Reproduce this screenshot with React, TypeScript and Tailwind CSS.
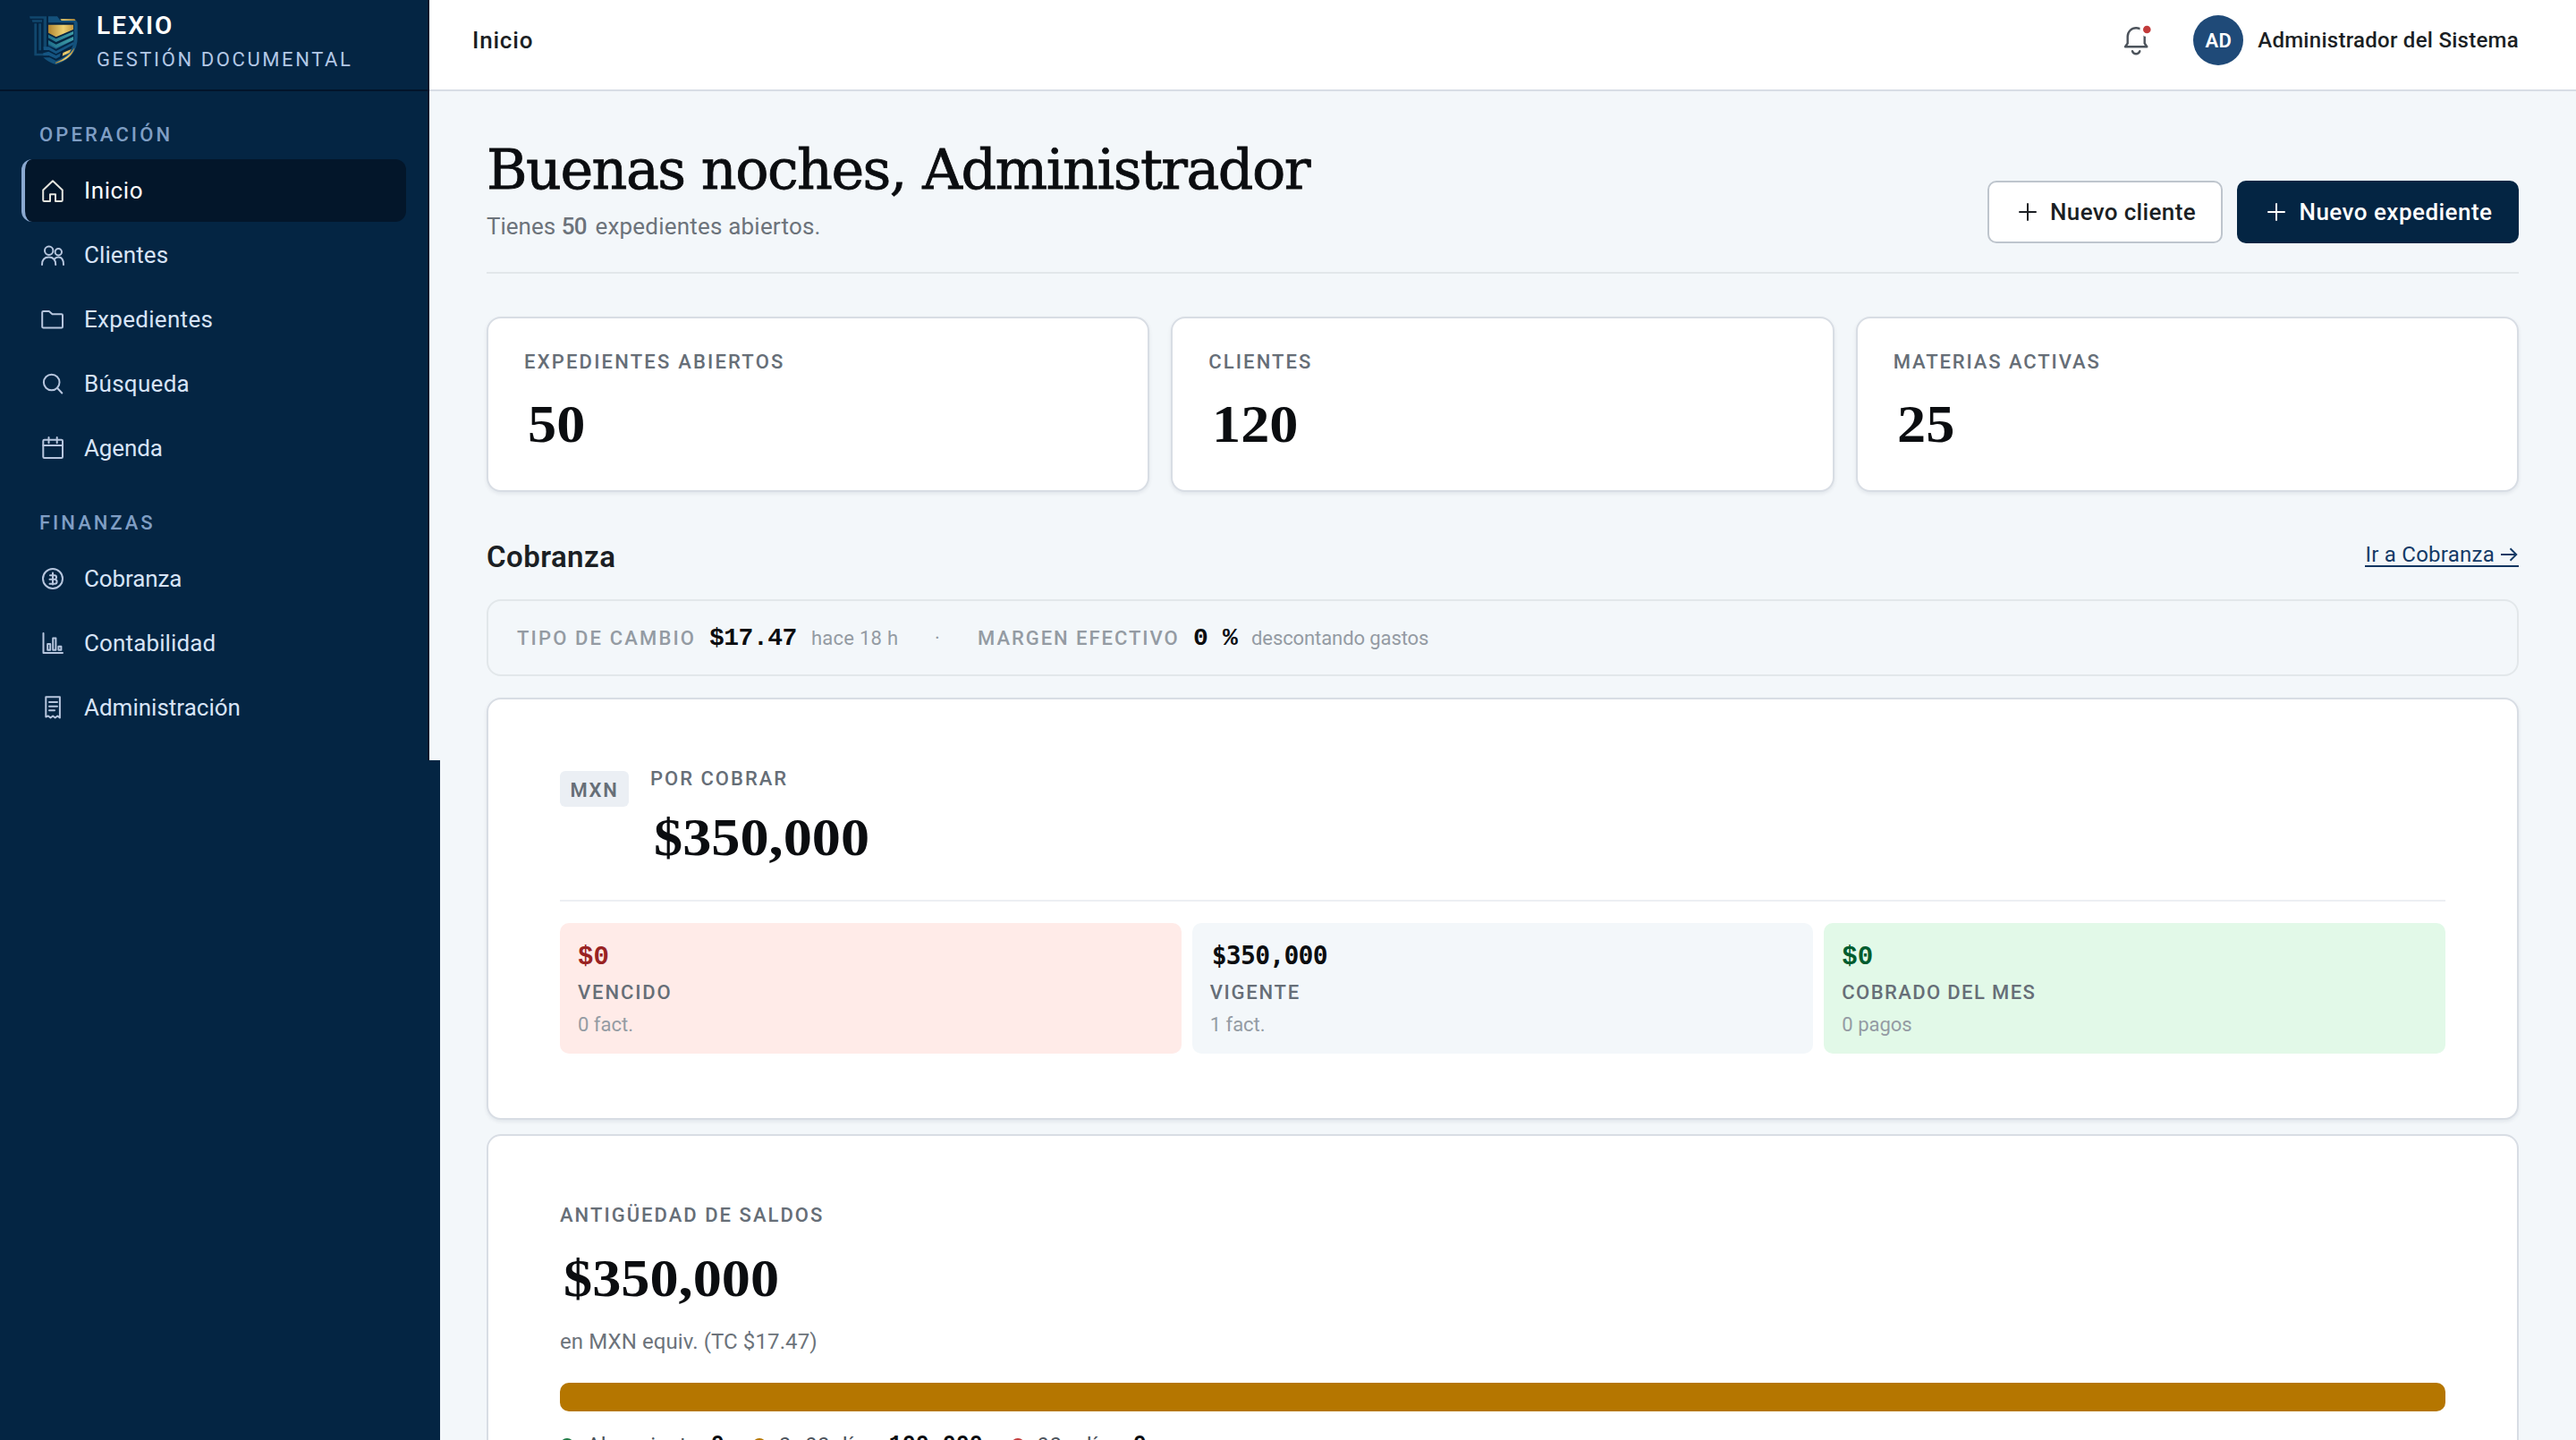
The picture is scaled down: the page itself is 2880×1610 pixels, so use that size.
import React from 'react';

const Icon = ({ children }: { children: React.ReactNode }) => (
  <svg
    className="h-[30px] w-[30px] shrink-0"
    viewBox="0 0 30 30"
    fill="none"
    stroke="currentColor"
    strokeWidth="2"
    strokeLinecap="round"
    strokeLinejoin="round"
  >
    {children}
  </svg>
);

const HomeIcon = () => (
  <Icon>
    <path d="M15 4.3 4.2 14.5v11.2c0 .8.5 1.3 1.3 1.3H12v-7.7h6V27h6.5c.8 0 1.3-.5 1.3-1.3V14.5L15 4.3Z" />
  </Icon>
);

const UsersIcon = () => (
  <Icon>
    <circle cx="10.7" cy="10.2" r="4.7" />
    <circle cx="21.3" cy="11.7" r="3.7" />
    <path d="M3 26c0-5.5 3-8.5 7.6-8.5s7.6 3 7.6 8.5M17.5 19c1-1 2.3-1.5 4-1.5 3.5 0 5.5 2.8 5.5 8.5" />
  </Icon>
);

const FolderIcon = () => (
  <Icon>
    <path d="M3.2 7.2c0-.8.5-1.3 1.3-1.3h6.3l3.7 3.3h10.2c.8 0 1.3.5 1.3 1.3v12.7c0 .8-.5 1.3-1.3 1.3H4.5c-.8 0-1.3-.5-1.3-1.3Z" />
  </Icon>
);

const SearchIcon = () => (
  <Icon>
    <circle cx="13.7" cy="13.5" r="8.8" />
    <path d="m20 19.800 5.300 5.700" />
  </Icon>
);

const CalendarIcon = () => (
  <Icon>
    <rect x="4.3" y="5.7" width="21.7" height="20.3" rx="1.3" />
    <path d="M4.3 12H26M10.5 3v6.3M19.7 3v6.3" />
  </Icon>
);

const CoinIcon = () => (
  <Icon>
    <circle cx="15" cy="15" r="11" />
    <path d="M15 8.5v13M12 11.3h4.8a2.2 2.2 0 0 1 0 4.5H11.5M16.8 15.8h.3a2.4 2.4 0 0 1 0 5H11.5" />
  </Icon>
);

const ChartIcon = () => (
  <Icon>
    <path d="M4.5 4v22H26" />
    <path d="M9.2 22.8v-6.8h3v6.800ZM15.2 22.8V9.500h3.200v13.300ZM21.400 22.800v-4h3v4Z" />
  </Icon>
);

const ReceiptIcon = () => (
  <Icon>
    <path d="M7.3 3.300h15.600v23.200l-2.600-2-2.600 2-2.600-2-2.600 2-2.600-2-2.600 1Z" />
    <path d="M11 9h9M11 13.700h9M11 18.300h6" />
  </Icon>
);

const PlusIcon = () => (
  <Icon>
    <path d="M15 6v18M6 15h18" />
  </Icon>
);

const Logo = () => (
  <svg className="h-14 w-[54px] shrink-0" viewBox="99 50 162 168">
    <defs>
      <linearGradient id="gold" x1="0" x2="1">
        <stop offset="0" stopColor="#b08430" />
        <stop offset="0.55" stopColor="#ecd071" />
        <stop offset="1" stopColor="#b98b35" />
      </linearGradient>
      <linearGradient id="teal" x1="0" x2="1">
        <stop offset="0" stopColor="#1f6f8b" />
        <stop offset="1" stopColor="#3f9da6" />
      </linearGradient>
    </defs>
    <g fill="#11476d">
      <path d="M99 54h57v108h-10V61H101ZM107 66h34v7h-32ZM115 78h8v100h28l12 8h-48ZM130 78h8v90h-8Z" />
      <path d="M146 156h18l24 14 58-30v9l-58 31-24-13h-18Z" fill="#155582" />
      <path d="M162 54h30l10 13h48q10 0 10 11v48q0 65-72 90-26-8-43-24h22l21 11q60-22 60-77V75h-86Z" fill="#14517b" />
      <path d="M163 172l25 13 16-8-3 12-13 7-25-11h-18v-8Z" fill="#155582" />
      <path d="m162 152 26 12 58-30v-7l-58 29-26-12Z" fill="#14517b" />
    </g>
    <path d="M202 63h48l4 5h-48ZM162 82h84v16l-58 25-26-14Z" fill="url(#gold)" />
    <path d="m162 115 26 14 58-25v10l-58 26-26-14ZM162 134l26 14 58-26v11l-58 27-26-14Z" fill="url(#teal)" />
    <path d="m211 176 28-12-6 12-24 11ZM186 209q42-14 64-50-8 38-64 53Z" fill="url(#gold)" />
  </svg>
);

const sections = [
  {
    title: 'OPERACIÓN',
    titleClass: 'tracking-[3.1px]',
    items: [
      { label: 'Inicio', icon: <HomeIcon />, labelClass: 'tracking-[0.6px]', active: true },
      { label: 'Clientes', icon: <UsersIcon />, labelClass: 'tracking-[0.1px]' },
      { label: 'Expedientes', icon: <FolderIcon />, labelClass: 'tracking-[0.3px]' },
      { label: 'Búsqueda', icon: <SearchIcon />, labelClass: 'tracking-[0.3px]' },
      { label: 'Agenda', icon: <CalendarIcon />, labelClass: 'tracking-[-0.1px]' },
    ],
  },
  {
    title: 'FINANZAS',
    titleClass: 'tracking-[3px]',
    items: [
      { label: 'Cobranza', icon: <CoinIcon />, labelClass: 'tracking-[-0.1px]' },
      { label: 'Contabilidad', icon: <ChartIcon />, labelClass: 'tracking-[0.13px]' },
      { label: 'Administración', icon: <ReceiptIcon />, labelClass: 'tracking-normal' },
    ],
  },
];

const stats = [
  { label: 'EXPEDIENTES ABIERTOS', value: '50', labelClass: 'tracking-[2.2px]' },
  { label: 'CLIENTES', value: '120', labelClass: 'tracking-[2.1px]' },
  { label: 'MATERIAS ACTIVAS', value: '25', labelClass: 'tracking-[1.9px]' },
];

const tiles = [
  {
    value: '$0',
    label: 'VENCIDO',
    detail: '0 fact.',
    box: 'bg-[#ffebe8]',
    valueClass: "pt-[3px] font-['Liberation_Mono',monospace] text-[29px] text-[#992222]",
    labelClass: 'tracking-[1.9px]',
  },
  {
    value: '$350,000',
    label: 'VIGENTE',
    detail: '1 fact.',
    box: 'bg-[#f3f7fa]',
    valueClass: "pl-[2px] pt-[1px] font-['DejaVu_Sans_Mono',monospace] text-[28px] tracking-[-0.7px] text-[#0b0d10]",
    labelClass: 'tracking-[1.75px]',
  },
  {
    value: '$0',
    label: 'COBRADO DEL MES',
    detail: '0 pagos',
    box: 'bg-[#e2f9e8]',
    valueClass: "pt-[3px] font-['Liberation_Mono',monospace] text-[29px] text-[#005c2e]",
    labelClass: 'tracking-[1.4px]',
  },
];

const legend = [
  { label: 'Al corriente', value: '0', dot: 'bg-[#1f7a45]' },
  { label: '0–90 días', value: '100,000', dot: 'bg-[#b57600]' },
  { label: '90+ días', value: '0', dot: 'bg-[#c23b3b]' },
];

function Amount({ children }: { children: React.ReactNode }) {
  return (
    <p className="ml-1 origin-left scale-x-[1.09] font-['Liberation_Serif',serif] text-[59px] leading-[72px] font-bold text-[#0b0d10]">
      {children}
    </p>
  );
}

function Sidebar() {
  return (
    <aside className="relative z-10 flex w-[480px] shrink-0 flex-col">
      <div className="h-[850px] border-r-2 border-[#02142a] bg-[#042543]">
        <div className="flex h-[102px] items-center border-b-2 border-[#02142a] pb-[10px] pl-[33px]">
          <Logo />
          <div className="ml-[21px] pt-[5px]">
            <p className="text-[28px] leading-[38px] font-semibold tracking-[2.1px] text-white">LEXIO</p>
            <p className="text-[22px] leading-[38px] tracking-[2.6px] text-[#b3c8e6]">GESTIÓN DOCUMENTAL</p>
          </div>
        </div>
        <nav className="px-6">
          {sections.map((section) => (
            <div key={section.title} className="pt-[35px]">
              <h2 className={`mb-[13px] pl-[20px] text-[22px] leading-7 font-medium text-[#7f9ec4] ${section.titleClass}`}>
                {section.title}
              </h2>
              <ul className="flex flex-col gap-[2px]">
                {section.items.map((item) => (
                  <li
                    key={item.label}
                    className={`flex h-[70px] w-[430px] items-center gap-5 rounded-[12px] border-l-4 pl-4 ${
                      item.active ? 'border-[#8aa8d0] bg-[#03162a] text-[#e4e4de]' : 'border-transparent text-[#b7c6de]'
                    }`}
                  >
                    {item.icon}
                    <span className={`text-[26px] ${item.active ? 'text-white' : 'text-[#d7e4f7]'} ${item.labelClass}`}>
                      {item.label}
                    </span>
                  </li>
                ))}
              </ul>
            </div>
          ))}
        </nav>
      </div>
      <div className="w-[492px] grow bg-[#042543]"></div>
    </aside>
  );
}

function Topbar() {
  return (
    <header className="flex h-[102px] items-center justify-between border-b-2 border-[#d8dde5] bg-white pr-16 pb-[10px] pl-12 text-[#1b1f24]">
      <span className="text-[26px] font-medium tracking-[0.8px]">Inicio</span>
      <div className="flex items-center">
        <svg
          className="mr-[46px] h-[34px] w-[34px]"
          viewBox="0 0 34 34"
          fill="none"
          stroke="#4c535b"
          strokeWidth="2.4"
          strokeLinecap="round"
          strokeLinejoin="round"
        >
          <path d="M4 24.300h24.300l-2.600-3.800v-7.800a9.500 9.500 0 0 0-19 0v7.800Z" />
          <path d="M12 29.200c.8 1.900 2.200 3 4.100 3s3.400-1.100 4.200-3" />
          <circle cx="28.3" cy="5" r="8" fill="#fff" stroke="none" />
          <circle cx="28.3" cy="5" r="4.3" fill="#c23b3b" stroke="none" />
        </svg>
        <span className="flex h-14 w-14 items-center justify-center rounded-full bg-[#1f4a78] text-[22px] font-semibold tracking-[0.3px] text-white">
          AD
        </span>
        <span className="ml-4 text-2xl font-medium tracking-[0.27px]">Administrador del Sistema</span>
      </div>
    </header>
  );
}

export default function App() {
  return (
    <div className="flex h-[1610px] w-[2880px] overflow-hidden bg-[#f3f7fa] font-['Roboto',sans-serif]">
      <Sidebar />
      <div className="min-w-0 grow">
        <Topbar />
        <main className="pt-12 pr-16 pl-16">
          <div className="flex items-end justify-between border-b-2 border-[#e2e7ea] pb-8">
            <div>
              <h1 className="font-['DejaVu_Serif',serif] text-[62px] leading-[80px] tracking-[-1.55px] text-[#0b0d10] [-webkit-text-stroke:0.8px_#0b0d10]">
                Buenas noches, Administrador
              </h1>
              <p className="mt-1 text-[26px] leading-[38px] text-[#6c737b]">
                Tienes <span className="mr-[3px] font-medium tracking-[-0.6px]">50</span>{' '}
                <span className="tracking-[0.2px]">expedientes abiertos.</span>
              </p>
            </div>
            <div className="flex gap-4">
              <button className="flex h-[70px] w-[263px] items-center justify-center gap-[10px] rounded-[10px] border-2 border-[#bec5cd] bg-white text-[26px] font-medium tracking-[0.34px] text-[#1b1f24]">
                <PlusIcon />
                Nuevo cliente
              </button>
              <button className="flex h-[70px] w-[315px] items-center justify-center gap-[10px] rounded-[10px] bg-[#042543] text-[26px] font-medium tracking-[0.48px] text-white">
                <PlusIcon />
                Nuevo expediente
              </button>
            </div>
          </div>

          <div className="mt-12 grid grid-cols-3 gap-6">
            {stats.map((stat) => (
              <div
                key={stat.label}
                className="h-[196px] rounded-2xl border-2 border-[#d8dde4] bg-white px-10 pt-[35px] shadow-[0_2px_4px_rgba(11,30,50,0.08)]"
              >
                <p className={`text-[22px] leading-7 font-medium text-[#666e77] ${stat.labelClass}`}>{stat.label}</p>
                <div className="mt-[19px]">
                  <Amount>{stat.value}</Amount>
                </div>
              </div>
            ))}
          </div>

          <div className="mt-[51px] flex h-11 items-center justify-between">
            <h2 className="text-[33px] font-semibold tracking-[0.45px] text-[#1b1f24]">Cobranza</h2>
            <a className="mb-[10px] flex h-8 items-center border-b-2 border-[#0f3560] pt-[6px] text-2xl leading-6 tracking-[0.25px] text-[#143a66]">
              Ir a Cobranza
              <svg
                className="ml-[6px] h-6 w-[21px]"
                viewBox="0 0 21 24"
                fill="none"
                stroke="currentColor"
                strokeWidth="1.9"
              >
                <path d="M1 12h17M11.500 5.300l6.800 6.700-6.800 6.700" />
              </svg>
            </a>
          </div>

          <div className="mt-[25px] flex h-[86px] items-center rounded-2xl border-2 border-[#e2e7ea] px-8">
            <div className="flex items-baseline pt-[2px] text-[22px] text-[#949ba3]">
              <span className="w-[215px] font-medium tracking-[2.15px]">TIPO DE CAMBIO</span>
              <span className="w-[114px] font-['Liberation_Mono',monospace] text-[28px] font-bold tracking-[-0.5px] text-[#0b0d10]">
                $17.47
              </span>
              <span className="w-[138px] tracking-[0.25px]">hace 18 h</span>
              <span className="w-[48px]">·</span>
              <span className="w-[241px] font-medium tracking-[1.96px]">MARGEN EFECTIVO</span>
              <span className="w-[65px] font-['Liberation_Mono',monospace] text-[28px] font-bold tracking-[-0.3px] text-[#0b0d10]">
                0 %
              </span>
              <span className="tracking-[-0.09px]">descontando gastos</span>
            </div>
          </div>

          <section className="mt-6 h-[472px] rounded-2xl border-2 border-[#d8dde4] bg-white px-20 pt-20 shadow-[0_2px_4px_rgba(11,30,50,0.08)]">
            <div className="flex items-start gap-6 border-b-2 border-[#eceff3] pb-[34px]">
              <span className="flex h-10 w-[77px] items-center justify-center rounded-[6px] bg-[#ebeff4] pt-[2px] text-[22px] font-semibold tracking-[1.7px] text-[#666e77]">
                MXN
              </span>
              <div>
                <p className="mb-[21px] text-[22px] leading-[17px] font-medium tracking-[2px] text-[#666e77]">POR COBRAR</p>
                <Amount>$350,000</Amount>
              </div>
            </div>
            <div className="mt-6 grid grid-cols-3 gap-3">
              {tiles.map((tile) => (
                <div key={tile.label} className={`h-[146px] rounded-[10px] px-5 pt-[18px] ${tile.box}`}>
                  <p className={`h-9 leading-9 font-bold ${tile.valueClass}`}>{tile.value}</p>
                  <p className={`mt-[10px] text-[22px] leading-7 font-medium text-[#666e77] ${tile.labelClass}`}>
                    {tile.label}
                  </p>
                  <p className="mt-2 text-[22px] leading-7 text-[#949ba3]">{tile.detail}</p>
                </div>
              ))}
            </div>
          </section>

          <section className="mt-4 h-[472px] rounded-2xl border-2 border-[#d8dde4] bg-white px-20 pt-[75px]">
            <p className="mb-5 text-[22px] leading-7 font-medium tracking-[2.03px] text-[#666e77]">ANTIGÜEDAD DE SALDOS</p>
            <Amount>$350,000</Amount>
            <p className="mt-[19px] text-2xl leading-8 tracking-[0.1px] text-[#6c737b]">en MXN equiv. (TC $17.47)</p>
            <div className="mt-[30px] h-8 rounded-[10px] bg-[#b57600]"></div>
            <div className="mt-5 flex gap-[31px]">
              {legend.map((item) => (
                <div key={item.label} className="flex h-9 items-center">
                  <span className={`mr-[14px] h-4 w-4 rounded-full ${item.dot}`}></span>
                  <span className="text-2xl tracking-[0.2px] text-[#4c535b]">{item.label}</span>
                  <span className="ml-[14px] font-['Liberation_Mono',monospace] text-[25px] font-bold text-[#0b0d10]">
                    {item.value}
                  </span>
                </div>
              ))}
            </div>
          </section>
        </main>
      </div>
    </div>
  );
}
